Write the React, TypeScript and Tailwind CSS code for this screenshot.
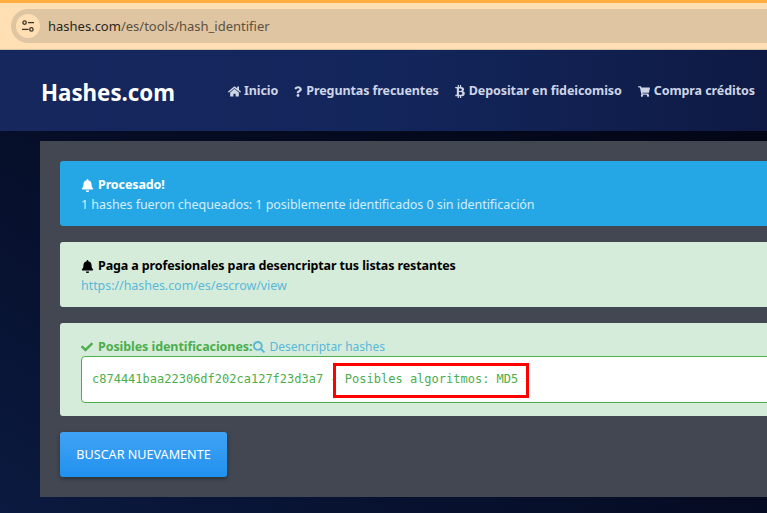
import React from 'react';
import { FaHome, FaQuestion, FaBtc, FaShoppingCart, FaBell, FaCheck, FaSearch } from 'react-icons/fa';

const navItems = [
  { icon: <FaHome className="text-[13px]" />, box: 'w-[13px] mr-[3px]', label: 'Inicio' },
  { icon: <FaQuestion className="text-[11px]" />, box: 'w-[8px] mr-[4px]', label: 'Preguntas frecuentes' },
  { icon: <FaBtc className="text-[13px]" />, box: 'w-[10px] mr-[4px]', label: 'Depositar en fideicomiso' },
  { icon: <FaShoppingCart className="text-[13px]" />, box: 'w-[12px] mr-[4px]', label: 'Compra créditos' },
];

const BrowserBar = () => (
  <div className="h-[50px] shrink-0 flex flex-col bg-[#ffdfb3] border-b border-[#d9c3a5]">
    <div className="h-[3px] bg-[#ffad3f]" />
    <div className="mt-[6px] ml-[11px] h-[34px] bg-[#dfc5a1] rounded-l-[17px] flex items-center pl-[5px]">
      <div className="w-[24px] h-[24px] rounded-full bg-[#ffdfb3] flex items-center justify-center">
        <svg width="14" height="14" viewBox="0 0 14 14" fill="none" stroke="#3d3427" strokeWidth="1.3">
          <circle cx="3.6" cy="3.6" r="1.7" />
          <path d="M7 3.6h6" />
          <circle cx="10.4" cy="10.4" r="1.7" />
          <path d="M1 10.4h6.6" />
        </svg>
      </div>
      <div className="ml-[8px] pt-[1px] text-[13px] leading-none text-[#5b5142]">
        <span className="text-[#2b2620]">hashes.com</span>/es/tools/hash_identifier
      </div>
    </div>
  </div>
);

const NavBar = () => (
  <div className="h-[81px] shrink-0 flex items-center bg-gradient-to-r from-[#16275e] via-[#13265c] to-[#0e1a44]">
    <div className="ml-[41px] w-[187px] pt-[5px] text-[22.3px] font-bold text-white leading-none">Hashes.com</div>
    <div className="flex items-center gap-[16px] pt-[1px] text-[#cdd5e6] text-[12.5px] tracking-[-0.08px] font-bold whitespace-nowrap">
      {navItems.map((item) => (
        <div key={item.label} className="flex items-center">
          <span className={`${item.box} flex justify-center`}>{item.icon}</span>
          <span>{item.label}</span>
        </div>
      ))}
    </div>
  </div>
);

export default function App() {
  return (
    <div className="relative w-[767px] h-[513px] overflow-hidden flex flex-col font-['Noto_Sans','Open_Sans',sans-serif] bg-gradient-to-tr from-[#0b1a40] via-[#050b22] to-[#020512]">
      <BrowserBar />
      <NavBar />

      <div className="mt-[10px] ml-[40px] w-[800px] h-[356px] shrink-0 bg-[#424752] p-[20px] flex flex-col gap-[16px]">
        <div className="h-[65px] rounded-[3px] bg-[#25a7e6] pt-[14px] pl-[21px] text-[12.5px] leading-[20px]">
          <div className="flex items-center gap-[4px] font-bold tracking-[-0.12px] text-white">
            <FaBell className="text-[13px]" />
            <span>Procesado!</span>
          </div>
          <div className="text-[#d5edf9] tracking-[-0.05px]">1 hashes fueron chequeados: 1 posiblemente identificados 0 sin identificación</div>
        </div>

        <div className="h-[65px] rounded-[3px] bg-[#d5ecdb] pt-[14px] pl-[21px] text-[12.5px] leading-[20px]">
          <div className="flex items-center gap-[4px] font-bold tracking-[-0.12px] text-black">
            <FaBell className="text-[13px]" />
            <span>Paga a profesionales para desencriptar tus listas restantes</span>
          </div>
          <div className="text-[#5bb8d8] tracking-[-0.05px]">https://hashes.com/es/escrow/view</div>
        </div>

        <div className="h-[93px] rounded-[3px] bg-[#d5ecdb] pt-[14px] pl-[21px] text-[12.5px] leading-[19px]">
          <div className="flex items-center">
            <FaCheck className="text-[#4cae4c] text-[12px] mr-[5px]" />
            <span className="font-bold tracking-[-0.08px] text-[#4cae4c]">Posibles identificaciones:</span>
            <FaSearch className="text-[#5bb8d8] text-[12px] ml-[1px] mr-[4px]" />
            <span className="text-[#5bb8d8] text-[12px]">Desencriptar hashes</span>
          </div>
          <div className="h-[47px] bg-white border border-[#4cae4c] rounded-[4px] flex items-center pl-[10px] text-[12px] text-[#4cae4c] font-['DejaVu_Sans_Mono',monospace] whitespace-pre">
            c874441baa22306df202ca127f23d3a7 - Posibles algoritmos: MD5
          </div>
        </div>

        <button className="w-[167px] h-[45px] pt-[2px] rounded-[3px] bg-gradient-to-b from-[#3fa3f5] to-[#2091ef] text-white text-[12.6px] uppercase shadow-[0_2px_4px_rgba(0,0,0,0.35)]">
          Buscar nuevamente
        </button>
      </div>

      {/* red annotation over the result */}
      <div className="absolute left-[333px] top-[363px] w-[196px] h-[35px] border-[3px] border-[#ff0000]" />
    </div>
  );
}
